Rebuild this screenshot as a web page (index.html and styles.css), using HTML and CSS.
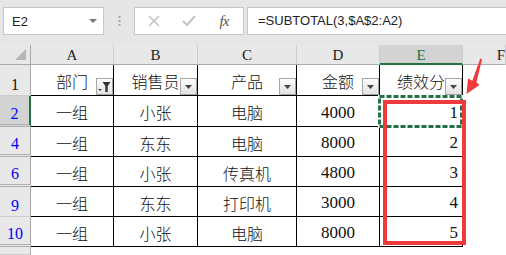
FILE: index.html
```html
<!DOCTYPE html>
<html lang="zh-CN">

<head>
    <meta charset="UTF-8">
    <title>SUBTOTAL</title>
    <link rel="stylesheet" href="styles.css">
</head>

<body>

    <div class="toolbar">
        <div class="name-box">
            <span>E2</span>
            <svg width="8" height="5" viewBox="0 0 8 5"><path d="M0 0H8L4 4Z" fill="#777"/></svg>
        </div>
        <div class="grip">
            <svg width="3" height="10" viewBox="0 0 3 10"><rect x="0.5" y="0" width="2" height="2" fill="#a8a8a8"/><rect x="0.5" y="4" width="2" height="2" fill="#a8a8a8"/><rect x="0.5" y="8" width="2" height="2" fill="#a8a8a8"/></svg>
        </div>
        <div class="fx-box">
            <span class="fx-slot">
                <svg width="12" height="12" viewBox="0 0 12 12"><path d="M1 1L11 11M11 1L1 11" stroke="#c4c4c4" stroke-width="1.6"/></svg>
            </span>
            <span class="fx-slot">
                <svg width="14" height="12" viewBox="0 0 14 12"><path d="M1 6L5 10L13 1" stroke="#c4c4c4" stroke-width="2" fill="none"/></svg>
            </span>
            <span class="fx-slot fx">fx</span>
        </div>
        <div class="formula">=SUBTOTAL(3,$A$2:A2)</div>
    </div>

    <div class="sheet">
        <!-- cabecera de columnas -->
        <div class="ch corner">
            <svg width="12" height="12" viewBox="0 0 12 12"><path d="M11 0V11H0Z" fill="#b5b5b5"/></svg>
        </div>
        <div class="ch">A</div>
        <div class="ch">B</div>
        <div class="ch">C</div>
        <div class="ch">D</div>
        <div class="ch active">E</div>
        <div class="ch last">F</div>

        <!-- fila 1 -->
        <div class="rh plain">1</div>
        <div class="cell">部门<span class="drop on"><svg width="13" height="12" viewBox="0 0 13 12"><path d="M0 8H4L2 10Z" fill="#444"/><path d="M4.5 1H12.5L9.7 5V11H7.3V5Z" fill="#333"/></svg></span></div>
        <div class="cell">销售员<span class="drop"><svg width="8" height="5" viewBox="0 0 8 5"><path d="M0 0H7L3.5 4Z" fill="#444"/></svg></span></div>
        <div class="cell">产品<span class="drop"><svg width="8" height="5" viewBox="0 0 8 5"><path d="M0 0H7L3.5 4Z" fill="#444"/></svg></span></div>
        <div class="cell">金额<span class="drop"><svg width="8" height="5" viewBox="0 0 8 5"><path d="M0 0H7L3.5 4Z" fill="#444"/></svg></span></div>
        <div class="cell">绩效分<span class="drop"><svg width="8" height="5" viewBox="0 0 8 5"><path d="M0 0H7L3.5 4Z" fill="#444"/></svg></span></div>
        <div class="blank"></div>

        <!-- fila 2 -->
        <div class="rh active gap">2</div>
        <div class="cell">一组</div>
        <div class="cell">小张</div>
        <div class="cell">电脑</div>
        <div class="cell num">4000</div>
        <div class="cell num right">1</div>
        <div class="blank"></div>

        <!-- fila 4 -->
        <div class="rh gap">4</div>
        <div class="cell">一组</div>
        <div class="cell">东东</div>
        <div class="cell">电脑</div>
        <div class="cell num">8000</div>
        <div class="cell num right">2</div>
        <div class="blank"></div>

        <!-- fila 6 -->
        <div class="rh gap">6</div>
        <div class="cell">一组</div>
        <div class="cell">小张</div>
        <div class="cell">传真机</div>
        <div class="cell num">4800</div>
        <div class="cell num right">3</div>
        <div class="blank"></div>

        <!-- fila 9 -->
        <div class="rh">9</div>
        <div class="cell">一组</div>
        <div class="cell">东东</div>
        <div class="cell">打印机</div>
        <div class="cell num">3000</div>
        <div class="cell num right">4</div>
        <div class="blank"></div>

        <!-- fila 10 -->
        <div class="rh gap">10</div>
        <div class="cell">一组</div>
        <div class="cell">小张</div>
        <div class="cell">电脑</div>
        <div class="cell num">8000</div>
        <div class="cell num right">5</div>
        <div class="blank"></div>

        <!-- fila parcial -->
        <div class="rh"></div>
        <div class="blank"></div>
        <div class="blank"></div>
        <div class="blank"></div>
        <div class="blank"></div>
        <div class="blank"></div>
        <div class="blank"></div>
    </div>

    <!-- selección, recuadro rojo y flecha por encima de la hoja -->
    <svg class="marks" width="506" height="255" viewBox="0 0 506 255">
        <rect x="379.5" y="96.5" width="82" height="30" fill="none" stroke="#fff" stroke-width="3"/>
        <rect x="379.5" y="96.5" width="82" height="30" fill="none" stroke="#217346" stroke-width="3" stroke-dasharray="5 2"/>
        <rect x="385" y="102" width="79" height="141" fill="none" stroke="#ee3a3a" stroke-width="4"/>
        <path d="M480.3 58.5L482 59.3L476.5 82.3L479.5 85L466.5 94L468 78.5L472.3 80.8Z" fill="#ee3a3a"/>
    </svg>

</body>

</html>
```

FILE: styles.css
```css
* {
    box-sizing: border-box;
}

body {
    margin: 0;
    width: 506px;
    height: 255px;
    overflow: hidden;
    position: relative;
    background-color: #fff;
    color: #111;
    font-family: "Noto Sans CJK SC", sans-serif;
}

/* Barra de fórmulas */
.toolbar {
    height: 45px;
    display: flex;
    align-items: flex-start;
    padding: 7px 0 0 3px;
    background-color: #e6e6e6;
}

.name-box {
    width: 101px;
    height: 28px;
    display: flex;
    align-items: center;
    justify-content: space-between;
    padding: 0 6px 0 8px;
    background-color: #fff;
    border: 1px solid #c6c6c6;
    font: 13px "Liberation Sans", sans-serif;
    color: #222;
}

.grip {
    width: 30px;
    display: flex;
    justify-content: center;
    padding-top: 9px;
}

.fx-box {
    width: 110px;
    height: 28px;
    display: flex;
    align-items: center;
    justify-content: space-between;
    padding: 0 8px;
    background-color: #fff;
    border: 1px solid #c6c6c6;
}

.fx-slot {
    width: 22px;
    display: flex;
    justify-content: center;
}

.fx {
    font: italic 15px "Liberation Serif", serif;
    color: #555;
    letter-spacing: -1px;
}

.formula {
    flex: 1;
    height: 28px;
    margin-left: 3px;
    padding-left: 10px;
    background-color: #fff;
    border: 1px solid #c6c6c6;
    border-right: none;
    font: 13px/26px "Liberation Sans", sans-serif;
    color: #222;
}

/* Hoja */
.sheet {
    height: 210px;
    display: grid;
    grid-template-columns: 31px 83px 84px 99px 83px 83px 1fr;
    grid-template-rows: 20px 31px 31px 30px 30px 30px 30px 1fr;
}

.ch {
    display: flex;
    align-items: center;
    justify-content: center;
    padding-top: 2px;
    background-color: #e8e8e8;
    border-right: 1px solid #cdcdcd;
    border-bottom: 1px solid #ababab;
    font: 15px "Liberation Serif", serif;
    color: #222;
}

.ch.corner {
    justify-content: flex-end;
    align-items: flex-end;
    padding: 0 3px 3px 0;
    border-right-color: #ababab;
}

.ch.active {
    background-color: #d3d3d3;
    color: #217346;
    border-bottom: 2px solid #217346;
}

.ch.last {
    justify-content: flex-end;
    padding-right: 0;
    overflow: hidden;
}

.rh {
    display: flex;
    align-items: flex-end;
    justify-content: center;
    padding-bottom: 1px;
    background-color: #e8e8e8;
    border-right: 1px solid #ababab;
    border-bottom: 1px solid #cdcdcd;
    font: 16px "Liberation Serif", serif;
    color: #0000ff;
}

.rh.gap {
    border-bottom: 3px double #b0b0b0;
}

.rh.plain {
    color: #111;
}

.rh.active {
    background-color: #d3d3d3;
    border-right: 2px solid #217346;
}

.cell {
    position: relative;
    display: flex;
    align-items: center;
    justify-content: center;
    padding-top: 2px;
    border-right: 1px solid #000;
    border-bottom: 1px solid #000;
    font-size: 16px;
    font-weight: 300;
}

.cell.num {
    font: 17px "Liberation Serif", serif;
    padding-top: 3px;
}

.cell.right {
    justify-content: flex-end;
    padding-right: 4px;
}

.blank {
    background-color: #fff;
}

/* Botón de filtro */
.drop {
    position: absolute;
    right: 0;
    bottom: 0;
    width: 17px;
    height: 17px;
    display: flex;
    align-items: center;
    justify-content: center;
    padding-top: 2px;
    border: 1px solid #a6a6a6;
    background: linear-gradient(#fdfdfd, #e2e2e2);
}

.drop.on {
    padding-top: 0;
}

.marks {
    position: absolute;
    top: 0;
    left: 0;
    pointer-events: none;
}
```
